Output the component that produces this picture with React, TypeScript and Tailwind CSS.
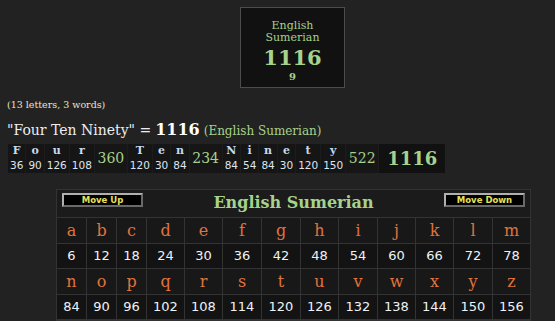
import React from 'react'

const serif = { fontFamily: '"DejaVu Serif", "Liberation Serif", serif' }
const sans = { fontFamily: '"DejaVu Sans", Verdana, sans-serif' }

const words = [
  { letters: [['F', 36], ['o', 90], ['u', 126], ['r', 108]], total: 360 },
  { letters: [['T', 120], ['e', 30], ['n', 84]], total: 234 },
  { letters: [['N', 84], ['i', 54], ['n', 84], ['e', 30], ['t', 120], ['y', 150]], total: 522 },
] as const

const alphabet = 'abcdefghijklmnopqrstuvwxyz'.split('')
const colW = [30, 30, 30, 38, 38, 39, 39, 38, 39, 38, 38, 39, 37]

function Button({ label }: { label: string }) {
  return (
    <div
      className="w-[81px] h-[14px] bg-black border-2 border-t-[#b0b0b0] border-l-[#b0b0b0] border-r-[#6a6a6a] border-b-[#6a6a6a] flex items-center justify-center text-[8.5px] font-bold text-[#e8e05a] leading-none"
      style={sans}
    >
      {label}
    </div>
  )
}

export default function App() {
  return (
    <div className="min-h-screen bg-[#222] pt-[7px] text-[#e8e8e8]" style={serif}>
      {/* result box */}
      <div className="ml-[240px] w-[105px] h-[81px] border border-[#4c4c4c] bg-[#111] flex flex-col items-center pt-[12px] text-[#a6d28c]">
        <div className="text-[11px] leading-[12px]">English</div>
        <div className="text-[11px] leading-[12px]">Sumerian</div>
        <div className="text-[21px] font-bold leading-[24px] mt-[2px]">1116</div>
        <div className="text-[10px] font-bold leading-[12px] mt-[1px]">9</div>
      </div>

      <div className="ml-[7px] mt-[11px] text-[9.5px] leading-[12px] text-[#e8e4d4]">(13 letters, 3 words)</div>

      <div className="ml-[7px] mt-[9px] flex items-baseline whitespace-nowrap leading-[20px]">
        <span className="text-[14px] text-[#eee]">"Four Ten Ninety" = </span>
        <span className="text-[16px] font-bold text-white ml-[4px]">1116</span>
        <span className="text-[12px] text-[#a6d28c] ml-[4px]">(English Sumerian)</span>
      </div>

      {/* breakdown */}
      <div className="ml-[8px] mt-[3px] flex w-max bg-[#1c1c1c] gap-px">
        {words.map((w, wi) => (
          <React.Fragment key={wi}>
            {w.letters.map(([l, v], i) => (
              <div key={i} className="flex flex-col bg-[#151515] px-[2px]">
                <div className="h-[14px] text-center text-[11px] font-bold leading-[14px] text-[#c6daee]">{l}</div>
                <div className="h-[15px] text-center text-[10.5px] leading-[14px] text-[#dde6f0]" style={sans}>{v}</div>
              </div>
            ))}
            <div className="w-[32px] flex items-center justify-center bg-[#161616] text-[14px] text-[#a6d28c]">{w.total}</div>
          </React.Fragment>
        ))}
        <div className="w-[66px] flex items-center justify-center bg-[#111] text-[18px] font-bold text-[#a6d28c]">1116</div>
      </div>

      {/* cipher table */}
      <div className="ml-[56px] mt-[16px] w-[475px] border border-[#333] bg-[#1b1b1b]">
        <div className="h-[28px] flex items-start justify-between px-[5px] pt-[3px] relative border-b border-[#333]">
          <Button label="Move Up" />
          <div className="absolute inset-x-0 top-[2px] text-center text-[16px] font-bold text-[#a6d28c] leading-[22px]">English Sumerian</div>
          <Button label="Move Down" />
        </div>
        {[0, 13].map((start) => (
          <React.Fragment key={start}>
            <div className="flex h-[26px] border-b border-[#333] bg-[#181818]">
              {alphabet.slice(start, start + 13).map((c, i) => (
                <div
                  key={c}
                  className="flex items-center justify-center border-r border-[#333] last:border-r-0 text-[16px] text-[#e0733c]"
                  style={{ width: colW[i] }}
                >
                  {c}
                </div>
              ))}
            </div>
            <div className="flex h-[25px] border-b border-[#333] bg-[#131313]">
              {alphabet.slice(start, start + 13).map((c, i) => (
                <div
                  key={c}
                  className="flex items-center justify-center border-r border-[#333] last:border-r-0 text-[13px] text-[#eef2f6]"
                  style={{ width: colW[i], ...sans }}
                >
                  {(start + i + 1) * 6}
                </div>
              ))}
            </div>
          </React.Fragment>
        ))}
      </div>
    </div>
  )
}
